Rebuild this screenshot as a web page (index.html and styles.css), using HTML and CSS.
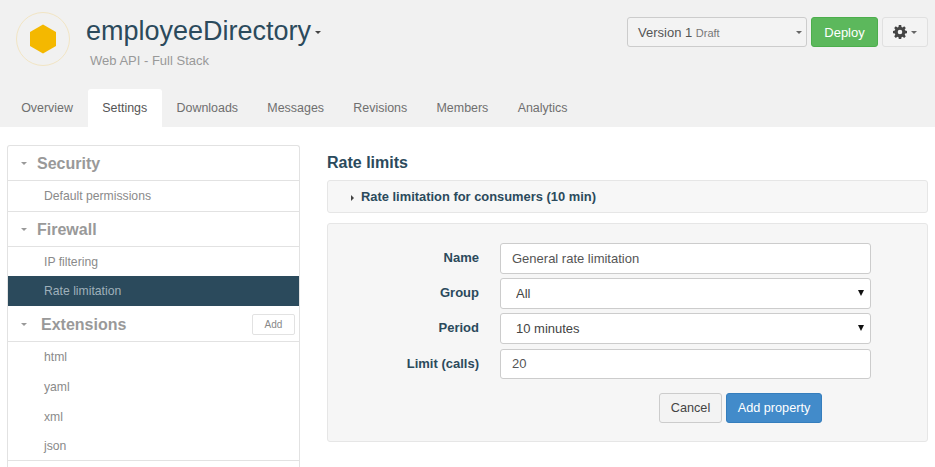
FILE: index.html
```html
<!DOCTYPE html>
<html lang="en">
<head>
  <meta charset="UTF-8">
  <title>employeeDirectory - Settings</title>
  <link rel="stylesheet" href="styles.css">
</head>
<body>
  <header class="top">
    <div class="top-row">
      <div class="logo">
        <svg width="26" height="30" viewBox="0 0 26 30"><polygon points="13,0.5 26,8 26,22 13,29.5 0,22 0,8" fill="#f4b800"/></svg>
      </div>
      <div class="title-block">
        <h1>employeeDirectory<span class="caret caret-title"></span></h1>
        <p class="subtitle">Web API - Full Stack</p>
      </div>
      <div class="actions">
        <button class="version">
          <span>Version 1 <small>Draft</small></span>
          <span class="caret"></span>
        </button>
        <button class="deploy">Deploy</button>
        <button class="gear">
          <svg width="14" height="14" viewBox="0 0 14 14"><path fill="#444" fill-rule="evenodd" d="M5.8 0h2.4l.3 1.9 1.1.5L11.2 1.3l1.6 1.6-1.1 1.6.5 1.1 1.8.3v2.3l-1.8.4-.5 1.1 1.1 1.6-1.6 1.6-1.6-1.1-1.1.5-.3 1.8H5.8l-.3-1.8-1.1-.5-1.6 1.1-1.6-1.6 1.1-1.6-.5-1.1L0 8.2V5.9l1.8-.3.5-1.1-1.1-1.6 1.6-1.6 1.6 1.1 1.1-.5zM7 4.7a2.3 2.3 0 1 0 0 4.6 2.3 2.3 0 0 0 0-4.6z"/></svg>
          <span class="caret"></span>
        </button>
      </div>
    </div>
    <nav class="tabs">
      <a>Overview</a>
      <a class="active">Settings</a>
      <a>Downloads</a>
      <a>Messages</a>
      <a>Revisions</a>
      <a>Members</a>
      <a>Analytics</a>
    </nav>
  </header>

  <div class="content">
    <aside class="side">
      <div class="side-head"><span class="caret"></span><h3>Security</h3></div>
      <a class="side-item side-last">Default permissions</a>
      <div class="side-head"><span class="caret"></span><h3>Firewall</h3></div>
      <a class="side-item short">IP filtering</a>
      <a class="side-item active">Rate limitation</a>
      <div class="side-head tall"><span class="caret"></span><h3 class="sec-ext">Extensions</h3><button class="add">Add</button></div>
      <a class="side-item">html</a>
      <a class="side-item">yaml</a>
      <a class="side-item short">xml</a>
      <a class="side-item short side-last">json</a>
    </aside>

    <main class="main">
      <h2>Rate limits</h2>
      <div class="collapse-row"><span class="caret-right"></span>Rate limitation for consumers (10 min)</div>
      <form class="well">
        <div class="field">
          <label for="name">Name</label>
          <input id="name" type="text" value="General rate limitation">
        </div>
        <div class="field">
          <label for="group">Group</label>
          <div class="select-wrap">
            <select id="group"><option>All</option></select>
          </div>
        </div>
        <div class="field field-period">
          <label for="period">Period</label>
          <div class="select-wrap">
            <select id="period"><option>10 minutes</option></select>
          </div>
        </div>
        <div class="field field-limit">
          <label for="limit">Limit (calls)</label>
          <input id="limit" type="text" value="20">
        </div>
        <div class="form-buttons">
          <button type="button" class="cancel">Cancel</button>
          <button type="button" class="primary">Add property</button>
        </div>
      </form>
    </main>
  </div>
</body>
</html>
```

FILE: styles.css
```css
html, body {
  height: 467px;
  overflow: hidden;
}
body {
  margin: 0;
  font-family: "Liberation Sans", Arial, sans-serif;
  font-size: 14px;
  color: #333;
  background: #fff;
}
button {
  font-family: inherit;
}
.caret {
  display: inline-block;
  width: 0;
  height: 0;
  border-top: 3px solid #666;
  border-left: 3px solid transparent;
  border-right: 3px solid transparent;
}

/* header */
.top {
  background: #f1f1f1;
  height: 127px;
  display: flex;
  flex-direction: column;
}
.top-row {
  display: flex;
  height: 89px;
  padding: 12px 7px 0 16px;
  box-sizing: border-box;
}
.logo {
  width: 54px;
  height: 54px;
  box-sizing: border-box;
  border: 1px solid #f1e5c4;
  border-radius: 50%;
  display: flex;
  align-items: center;
  justify-content: center;
}
.title-block {
  margin-left: 16px;
}
h1 {
  margin: 2px 0 0;
  font-size: 27px;
  line-height: 35px;
  font-weight: normal;
  color: #2b4a5c;
}
.caret-title {
  vertical-align: middle;
  margin-left: 4px;
  border-top-color: #444;
}
.subtitle {
  margin: 4px 0 0 4px;
  font-size: 13px;
  line-height: 16px;
  color: #999;
}
.actions {
  margin-left: auto;
  display: flex;
  gap: 4px;
  height: 30px;
  margin-top: 5px;
}
.actions button {
  box-sizing: border-box;
  height: 30px;
  border-radius: 3px;
  font-size: 13px;
}
.version {
  width: 180px;
  padding: 0 4px 0 10px;
  display: flex;
  align-items: center;
  justify-content: space-between;
  background: #f3f3f3;
  border: 1px solid #ccc;
  color: #555;
}
.version small {
  font-size: 11px;
  color: #777;
}
.deploy {
  width: 67px;
  padding: 0;
  background: #5cb85c;
  border: 1px solid #4cae4c;
  color: #fff;
}
.gear {
  width: 46px;
  margin-left: 0;
  padding: 0;
  display: flex;
  align-items: center;
  justify-content: center;
  gap: 4px;
  background: #f3f3f3;
  border: 1px solid #e0e0e0;
}
.tabs {
  display: flex;
  height: 38px;
  padding-left: 6.5px;
}
.tabs a {
  padding: 0 14.65px;
  line-height: 38px;
  font-size: 12.45px;
  color: #6f6f6f;
}
.tabs a.active {
  background: #fff;
  color: #555;
  border-radius: 3px 3px 0 0;
}

/* sidebar and main */
.content {
  display: flex;
  padding: 18px 7px 0;
  gap: 27px;
}
.side {
  width: 293px;
  box-sizing: border-box;
  height: 340px;
  border: 1px solid #e2e2e2;
  border-bottom: 0;
  border-radius: 3px 3px 0 0;
  flex: none;
}
.side-head {
  height: 35px;
  box-sizing: border-box;
  border-bottom: 1px solid #e2e2e2;
  display: flex;
  align-items: center;
  padding: 1px 4px 0 13px;
}
.side-head.tall {
  height: 36px;
  padding-top: 2px;
}
.side-head .caret {
  border-top-color: #999;
}
.side-head h3 {
  margin: 0 0 0 10px;
  font-size: 16px;
  color: #999;
}
.side-head h3.sec-ext {
  margin-left: 14px;
}
.add {
  margin-left: auto;
  width: 43px;
  height: 21px;
  padding: 0;
  font-size: 10px;
  color: #888;
  background: #fff;
  border: 1px solid #e2e2e2;
  border-radius: 2px;
}
.side-item {
  display: block;
  height: 30px;
  line-height: 30px;
  padding-left: 36px;
  font-size: 12.2px;
  color: #8a8a8a;
}
.side-item.short {
  height: 29px;
}
.side-last {
  border-bottom: 1px solid #e2e2e2;
}
.side-item.active {
  background: #2b4a5c;
  color: #9fb0ba;
}
.main {
  flex: 1;
}
h2 {
  margin: 9px 0 8px;
  font-size: 16px;
  line-height: 18px;
  color: #2b4a5c;
}
.collapse-row {
  height: 33px;
  box-sizing: border-box;
  border: 1px solid #e6e6e6;
  border-radius: 3px;
  background: #f7f7f7;
  padding-left: 23px;
  line-height: 32px;
  font-size: 12.9px;
  font-weight: bold;
  color: #2b4a5c;
}
.caret-right {
  display: inline-block;
  width: 0;
  height: 0;
  margin-right: 7px;
  vertical-align: 0;
  border-left: 3px solid #444;
  border-top: 3px solid transparent;
  border-bottom: 3px solid transparent;
}
.well {
  margin-top: 10px;
  height: 219px;
  box-sizing: border-box;
  border: 1px solid #e6e6e6;
  border-radius: 3px;
  background: #f6f6f6;
  padding-top: 19px;
}
.field {
  display: flex;
  align-items: center;
  margin-bottom: 4px;
}
.field-period {
  margin-bottom: 5px;
}
.field label {
  width: 151px;
  text-align: right;
  font-size: 13px;
  font-weight: bold;
  color: #2b4a5c;
  margin-right: 21px;
  padding-bottom: 2px;
}
.field input,
.select-wrap {
  width: 371px;
  height: 31px;
  box-sizing: border-box;
}
.field-limit input {
  height: 30px;
  padding-bottom: 2px;
}
.field input,
.field select {
  border: 1px solid #ccc;
  border-radius: 3px;
  background: #fff;
  font-family: inherit;
  font-size: 13px;
  color: #555;
  padding-left: 11px;
  padding-right: 11px;
}
.select-wrap {
  position: relative;
}
.field select {
  width: 100%;
  height: 100%;
  appearance: none;
  padding-left: 15px;
  color: #444;
}
.select-wrap::after {
  content: "";
  position: absolute;
  right: 7px;
  top: 12px;
  border-top: 6px solid #111;
  border-left: 3px solid transparent;
  border-right: 3px solid transparent;
}
.form-buttons {
  display: flex;
  gap: 4px;
  margin: 14px 0 0 331px;
}
.form-buttons button {
  height: 30px;
  box-sizing: border-box;
  border-radius: 3px;
  font-size: 12.7px;
  padding: 0;
}
.cancel {
  width: 63px;
  background: #f3f3f3;
  border: 1px solid #ccc;
  color: #444;
}
.primary {
  width: 96px;
  background: #428bca;
  border: 1px solid #357ebd;
  color: #fff;
}
```
